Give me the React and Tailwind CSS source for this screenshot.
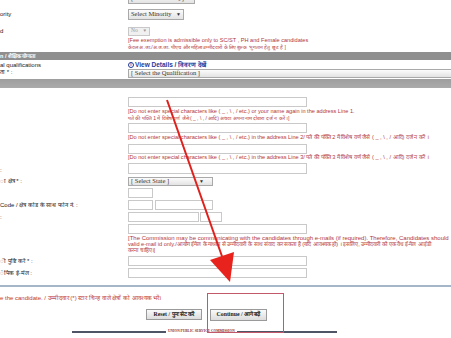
import React from "react";

const LBL = "w-[128px] shrink-0 whitespace-nowrap overflow-hidden text-[6px] leading-[7px] text-[#222]";
const RED = "whitespace-nowrap text-[5.6px] leading-[6.5px] text-[#b3363a]";
const INP = "h-[10px] border border-[#c9c9c9] bg-white";
const SEL = "flex items-center border border-[#a9a9a9] bg-gradient-to-b from-[#fbfbfb] to-[#e3e3e3] px-[2px] whitespace-nowrap text-[6.5px] leading-none text-[#333] [font-family:'Liberation_Serif',serif]";

function Row({ label, children, className = "", labelClass = "" }) {
  return (
    <div className={"flex " + className}>
      <div className={LBL + " " + labelClass}>{label}</div>
      <div className="flex min-w-0 flex-1 flex-col">{children}</div>
    </div>
  );
}

export default function App() {
  return (
    <div className="relative h-[338px] w-[451px] overflow-hidden bg-white [font-family:'Liberation_Sans',Arial,sans-serif]">
      {/* top partial select */}
      <Row className="h-[4px]">
        <div className={SEL + " -mt-[7px] h-[11px] w-[67px] justify-between"}>
          <span>[Select Community]</span>
          <span className="text-[5px]">▼</span>
        </div>
      </Row>
      <Row className="h-[21px] items-center" label="ority">
        <div className={SEL + " h-[11px] w-[56px] justify-between"}>
          <span>Select Minority</span>
          <span className="text-[5px]">▼</span>
        </div>
      </Row>
      <Row className="h-[12px] items-center" label="d">
        <div className="flex h-[9px] w-[22px] items-center justify-between border border-[#c8c8c8] bg-[#f0f0f0] px-[2px] text-[5.5px] leading-none text-[#999] [font-family:'Liberation_Serif',serif]">
          <span>No</span>
          <span className="text-[4.5px]">▼</span>
        </div>
      </Row>
      <Row className="h-[15px] pt-[0px]">
        <div className={RED}>[Fee exemption is admissible only to SC/ST , PH and Female candidates</div>
        <div className={RED + " text-[5px]"}>केवल अ.जा./अ.ज.जा. पीएच और महिला उम्मीदवारों के लिए शुल्क भुगतान हेतु छूट है ]</div>
      </Row>
      {/* section header */}
      <div className="h-[8px] bg-[#8f8f8f] text-[5.5px] leading-[8px] text-white whitespace-nowrap font-bold">n / शैक्षिक योग्यता</div>
      <Row className="h-[19px] pt-[1px]" label={<div className="pt-[1px]"><div>al qualifications</div><div>ता * :</div></div>}>
        <div className="flex h-[8px] items-center gap-[1px] whitespace-nowrap text-[6.5px] font-bold leading-none text-[#1d3a9c]">
          <span className="flex h-[6px] w-[6px] items-center justify-center rounded-full border border-[#1d3a9c] text-[4.5px] font-bold">i</span>
          <span>View Details / विवरण देखें</span>
        </div>
        <div className={SEL + " mt-[0px] h-[9px] w-full border-r-0"}>
          <span>[ Select the Qualification ]</span>
        </div>
      </Row>
      <div className="h-[9px] bg-gradient-to-b from-[#9d9d9d] to-[#ababab]" />
      <div className="h-[9px]" />
      {/* address */}
      <Row>
        <div className={INP + " w-[179px]"} />
        <div className={RED + " mt-[1px]"}>[Do not enter special characters like ( _ , \ , / etc.) or your name again in the address Line 1.</div>
        <div className={RED + " text-[5px]"}>पते की पंक्ति 1 में विशेष वर्ण जैसे ( _ , \ , / आदि) अथवा अपना नाम दोबारा दर्ज न करें ।]</div>
        <div className={INP + " mt-[2px] w-[179px]"} />
        <div className={RED + " mt-[1px]"}>[Do not enter special characters like ( _ , \ , / etc.) in the address Line 2/ पते की पंक्ति 2 में विशेष वर्ण जैसे ( _ , \ , / आदि) दर्ज न करें ।</div>
        <div className={INP + " mt-[3px] w-[179px]"} />
        <div className={RED + " mt-[0px]"}>[Do not enter special characters like ( _ , \ , / etc.) in the address Line 3/ पते की पंक्ति 3 में विशेष वर्ण जैसे ( _ , \ , / आदि) दर्ज न करें ।</div>
      </Row>
      <Row className="mt-[3px] items-end" label=":">
        <div className={INP + " h-[11px] w-[179px]"} />
      </Row>
      <Row className="mt-[3px] h-[9px] items-center" label="ा क्षेत्र * :">
        <div className={SEL + " h-[9px] w-[85px] justify-between"}>
          <span>[ Select State ]</span>
          <span className="mr-[6px] text-[5px]">▼</span>
        </div>
      </Row>
      <Row className="mt-[2px]">
        <div className={INP + " w-[25px]"} />
      </Row>
      <Row className="mt-[2px] items-center" label="Code / क्षेत्र कोड के साथ फोन नं. :">
        <div className="flex gap-[2px]">
          <div className={INP + " w-[25px]"} />
          <div className={INP + " w-[58px]"} />
        </div>
      </Row>
      <Row className="mt-[2px] items-center" label=":">
        <div className="flex gap-[1px]">
          <div className={INP + " w-[71px]"} />
          <div className={INP + " w-[22px]"} />
        </div>
      </Row>
      <Row className="mt-[2px]">
        <div className={INP + " w-[179px]"} />
        <div className={RED + " mt-[1px] text-[6px] leading-[6px]"}>[The Commission may be communicating with the candidates through e-mails (if required). Therefore, Candidates should</div>
        <div className={RED + " text-[5.5px] leading-[6px]"}>valid e-mail id only./आयोग ईमेल के माध्यम से उम्मीदवारों के साथ संवाद कर सकता है (यदि आवश्यक हो) । इसलिए, उम्मीदवारों को एक वैध ई-मेल आईडी</div>
        <div className={RED + " text-[5.5px] leading-[6px]"}>करना चाहिए।]</div>
      </Row>
      <Row className="mt-[3px] items-center" label="ी पुष्टि करें * :">
        <div className={INP + " w-[179px]"} />
      </Row>
      <Row className="mt-[2px] items-center" label="ेपिक ई-मेल :">
        <div className={INP + " w-[179px]"} />
      </Row>
      <div className="mt-[7px] h-[2px] bg-[#a4b6c8]" />
      <div className="mt-[8px] whitespace-nowrap text-[6px] leading-[7px] text-[#c0392b]">e the candidate. / उम्मीदवार (*) स्टार चिन्ह वाले क्षेत्रों को आवश्यक भरें।</div>
      <div className="mt-[6px] flex h-[13px] items-center">
        <div className="w-[146px] shrink-0" />
        <div className="flex h-[11px] w-[56px] items-center justify-center border border-[#9a9a9a] bg-gradient-to-b from-[#fafafa] to-[#dcdcdc] whitespace-nowrap text-[5.8px] font-bold leading-none text-[#222] [font-family:'Liberation_Serif',serif]">Reset / पुनः सेट करें</div>
        <div className="w-[8px] shrink-0" />
        <div className="flex h-[12px] w-[57px] items-center justify-center border border-[#9a9a9a] bg-gradient-to-b from-[#fafafa] to-[#dcdcdc] whitespace-nowrap text-[5.8px] font-bold leading-none text-[#222] [font-family:'Liberation_Serif',serif]">Continue / आगे बढ़ें</div>
      </div>
      <div className="mt-[9px] flex items-center">
        <div className="w-[72px] shrink-0" />
        <div className="h-[1.5px] w-[94px] bg-[#4f5564]" />
        <div className="whitespace-nowrap px-[2px] text-[3.5px] font-bold leading-none text-[#8a2a2a] [font-family:'Liberation_Serif',serif]">UNION PUBLIC SERVICE COMMISSION</div>
        <div className="h-[1.5px] w-[100px] bg-[#4f5564]" />
      </div>

      {/* annotation: red rectangle */}
      <div className="pointer-events-none absolute left-[207px] top-[293px] h-[40px] w-[77px] border border-[#c2596a]" />
      {/* annotation: red arrow */}
      <svg className="pointer-events-none absolute left-0 top-0" width="451" height="338" viewBox="0 0 451 338">
        <line x1="167" y1="100" x2="224" y2="262" stroke="#e0201c" strokeWidth="2" />
        <polygon points="230,282 210,260 234,252" fill="#e8231d" />
      </svg>
    </div>
  );
}
